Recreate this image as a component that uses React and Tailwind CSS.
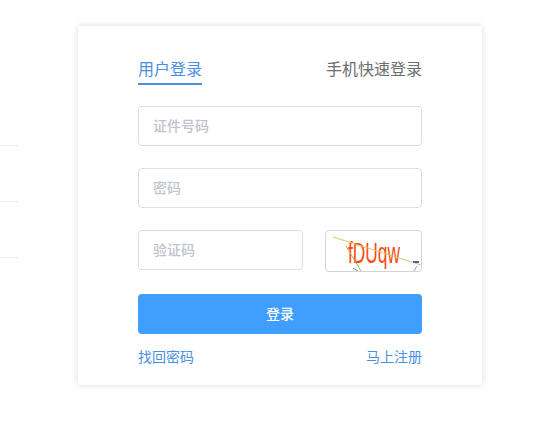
import React from "react";

const cjk = "font-['Liberation_Sans','Noto_Sans_CJK_SC',sans-serif]";

const Field = ({ placeholder, className = "w-full" }) => (
  <input
    type="text"
    placeholder={placeholder}
    className={`${className} h-10 px-[14px] text-sm font-medium bg-white border border-[#dcdfe6] rounded outline-none placeholder:text-[#c0c4cc]`}
  />
);

const Captcha = () => (
  <div className="w-[97px] h-[42px] border border-[#d4d4d4] rounded">
    <svg width="95" height="40" viewBox="0 0 95 40">
      <text
        x="22"
        y="32"
        fill="#fb4a10"
        fontFamily="Liberation Sans"
        fontSize="29"
        textLength="52"
        lengthAdjust="spacingAndGlyphs"
      >
        fDUqw
      </text>
      <path d="M7 6 L95 34" stroke="#c4cf6c" strokeWidth="1" fill="none" />
      <path d="M20 15 L35 40" stroke="#b5b060" strokeWidth="1" fill="none" />
      <path d="M27 37 L32 40" stroke="#6f9ab5" strokeWidth="1" fill="none" />
      <path d="M87 31 L93 31" stroke="#6a55b0" strokeWidth="2" fill="none" />
      <path d="M88 40 L91 35" stroke="#c58ab5" strokeWidth="1" fill="none" />
    </svg>
  </div>
);

export default function App() {
  return (
    <div className={`${cjk} flex w-[556px] h-[424px] bg-white overflow-hidden`}>
      <div className="w-[19px] pt-[145px] flex flex-col gap-[55px]">
        <div className="h-px bg-[#ececec]" />
        <div className="h-px bg-[#ececec]" />
        <div className="h-px bg-[#ececec]" />
      </div>
      <div className="ml-[59px] mt-[26px] w-[404px] h-[359px] px-[60px] pt-[30px] bg-white shadow-[0_0_6px_rgba(0,0,0,0.15)]">
        <div className="flex justify-between h-[50px]">
          <div className="h-[29px] pt-px text-base leading-[26px] text-[#4a90e2] border-b-2 border-[#4a90e2]">
            用户登录
          </div>
          <div className="pt-px text-base leading-[26px] text-[#6b6d70]">手机快速登录</div>
        </div>
        <div className="flex flex-col gap-[22px]">
          <Field placeholder="证件号码" />
          <Field placeholder="密码" />
          <div className="flex justify-between items-start">
            <Field placeholder="验证码" className="w-[165px]" />
            <Captcha />
          </div>
          <button className="h-10 text-sm font-medium text-white bg-[#409eff] rounded">登录</button>
        </div>
        <div className="flex justify-between mt-[13px] text-sm leading-[20px] text-[#4a90e2]">
          <a href="#">找回密码</a>
          <a href="#">马上注册</a>
        </div>
      </div>
    </div>
  );
}
